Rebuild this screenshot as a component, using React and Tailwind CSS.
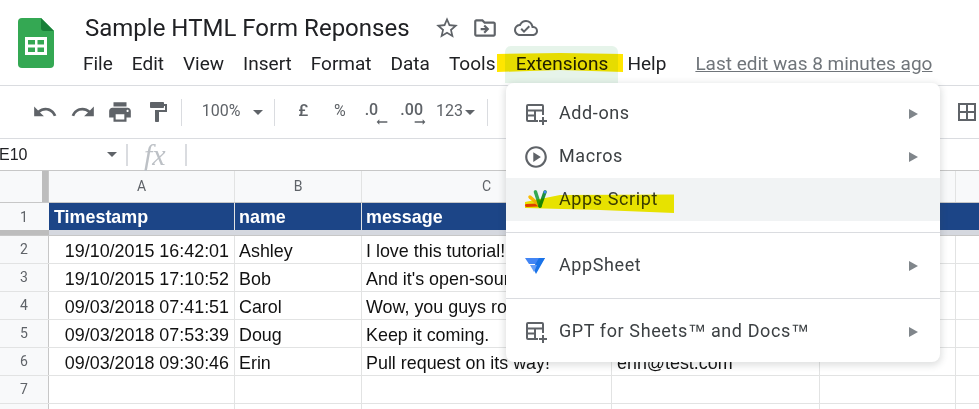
import {
  MdUndo,
  MdRedo,
  MdPrint,
  MdFormatPaint,
  MdStarBorder,
  MdOutlineDriveFileMove,
  MdOutlineCloudDone,
  MdOutlinePlayCircle,
  MdBorderAll,
  MdArrowRightAlt,
} from "react-icons/md";

const menus = ["File", "Edit", "View", "Insert", "Format", "Data", "Tools"];

const rows = [
  { n: 2, a: "19/10/2015 16:42:01", b: "Ashley", c: "I love this tutorial!", d: "ashley@test.com" },
  { n: 3, a: "19/10/2015 17:10:52", b: "Bob", c: "And it's open-source!", d: "bob@test.com" },
  { n: 4, a: "09/03/2018 07:41:51", b: "Carol", c: "Wow, you guys rock!", d: "carol@test.com" },
  { n: 5, a: "09/03/2018 07:53:39", b: "Doug", c: "Keep it coming.", d: "doug@test.com" },
  { n: 6, a: "09/03/2018 09:30:46", b: "Erin", c: "Pull request on its way!", d: "erin@test.com" },
  { n: 7, a: "", b: "", c: "", d: "" },
  { n: "", a: "", b: "", c: "", d: "" },
];

function SheetsLogo() {
  return (
    <svg viewBox="0 0 36 50" className="w-[36px] h-[50px]">
      <path d="M4 0H23L36 13V46a4 4 0 0 1-4 4H4a4 4 0 0 1-4-4V4a4 4 0 0 1 4-4z" fill="#34a853" />
      <path d="M23 0L36 13H26a3 3 0 0 1-3-3z" fill="#188038" />
      <path d="M7 19H29V37H7z" fill="#fff" />
      <path d="M10 22H17V26.500H10zM19.500 22H26V26.500H19.500zM10 29.500H17V34H10zM19.500 29.500H26V34H19.500z" fill="#34a853" />
    </svg>
  );
}

function AddonIcon() {
  return (
    <svg viewBox="0 0 22 22" className="w-[22px] h-[22px]" fill="none" stroke="#5f6368" strokeWidth="2">
      <path d="M13 18H3a1 1 0 0 1-1-1V3a1 1 0 0 1 1-1h14a1 1 0 0 1 1 1v9" />
      <path d="M2 7.500H18M2 12.500H11M10 7.500V18" />
      <path d="M18 14V22M14 18H22" />
    </svg>
  );
}

function AppsScriptIcon() {
  return (
    <svg viewBox="0 0 22 20" className="w-[22px] h-[20px]">
      <path d="M1.500 15.500L13 15" stroke="#ea4335" strokeWidth="3" strokeLinecap="round" />
      <path d="M5 7L13 14" stroke="#fbbc04" strokeWidth="3.500" strokeLinecap="round" />
      <path d="M10.500 2L15 16" stroke="#34a853" strokeWidth="3.500" strokeLinecap="round" />
      <path d="M20 2L15 16" stroke="#1e8e3e" strokeWidth="3.500" strokeLinecap="round" />
      <circle cx="10.500" cy="2" r="1.500" fill="#34a853" />
      <circle cx="20" cy="2" r="1.500" fill="#4285f4" />
    </svg>
  );
}

function AppSheetIcon() {
  return (
    <svg viewBox="0 0 20 18" className="w-[20px] h-[18px]">
      <path d="M0 1H20L16 7H4z" fill="#4285f4" />
      <path d="M14 1H20L11 17 8 11z" fill="#1a73e8" />
      <path d="M5 8H12L9 15z" fill="#669df6" />
    </svg>
  );
}

function Caret({ className }) {
  return <span className={`w-0 h-0 border-x-[5px] border-x-transparent border-t-[5px] border-t-[#5f6368] ${className || ""}`} />;
}

function Sep() {
  return <div className="w-px h-[27px] bg-[#dadce0]" />;
}

function ToolIcon({ children }) {
  return <div className="w-[38px] flex justify-center text-[#5f6368]">{children}</div>;
}

function MenuItem({ icon, label, active, highlight }) {
  return (
    <div className={`relative h-[43px] flex items-center pl-[19px] pr-[22px] ${active ? "bg-[#f1f3f4]" : ""}`}>
      <div className="w-[34px] flex items-center">{icon}</div>
      <span className="flex-1 text-[18px] text-[#3c4043] tracking-[0.6px] pb-[2px]">{label}</span>
      {!highlight && <span className="w-0 h-0 border-y-[5px] border-y-transparent border-l-[9px] border-l-[#80868b]" />}
    </div>
  );
}

function Cell({ w, children, className }) {
  return (
    <div className={`${w} shrink-0 h-full border-r border-[#e2e3e3] overflow-hidden whitespace-nowrap flex items-center ${className || ""}`}>
      {children}
    </div>
  );
}

export default function App() {
  return (
    <div className="relative w-[979px] h-[409px] overflow-hidden bg-white font-['Roboto',sans-serif]">
      {/* Title + menu bar */}
      <header className="h-[85px] flex border-b border-[#dadce0] box-content">
        <div className="w-[85px] shrink-0 pl-[18px] pt-[18px]">
          <SheetsLogo />
        </div>
        <div className="flex-1 min-w-0">
          <div className="h-[46px] flex items-center pt-[9px]">
            <h1 className="text-[24px] font-normal text-[#202124] w-[349px]">Sample HTML Form Reponses</h1>
            <MdStarBorder className="text-[#5f6368] w-[26px] h-[26px]" />
            <MdOutlineDriveFileMove className="text-[#5f6368] w-[26px] h-[26px] ml-[12px]" />
            <MdOutlineCloudDone className="text-[#5f6368] w-[24px] h-[24px] ml-[16px]" />
          </div>
          <nav className="h-[37px] flex items-center text-[19px] text-[#202124] -ml-[2px]">
            <div className="flex gap-[19px]">
              {menus.map((m) => (
                <span key={m}>{m}</span>
              ))}
            </div>
            <span className="ml-[10px] h-full w-[113px] flex items-center justify-center bg-[#e6f4ea] rounded-t-[6px]">Extensions</span>
            <span className="ml-[9px]">Help</span>
            <span className="ml-[29px] text-[#70757a] underline">Last edit was 8 minutes ago</span>
          </nav>
        </div>
      </header>

      {/* Toolbar */}
      <div className="h-[52px] flex items-center pl-[26px] border-b border-[#dadce0] box-content text-[#5f6368]">
        <ToolIcon><MdUndo size={26} /></ToolIcon>
        <ToolIcon><MdRedo size={26} /></ToolIcon>
        <ToolIcon><MdPrint size={26} /></ToolIcon>
        <ToolIcon><MdFormatPaint size={24} /></ToolIcon>
        <div className="ml-[4px]"><Sep /></div>
        <span className="ml-[20px] w-[52px] text-[16px] pb-[2px]">100%</span>
        <Caret className="mr-[11px]" />
        <Sep />
        <span className="ml-[23px] w-[35px] text-[17px] font-medium pb-[2px]">£</span>
        <span className="w-[32px] text-[16px] pl-[1px] pb-[2px]">%</span>
        <div className="w-[36px] relative h-[30px] text-[16px] font-medium">
          <span className="absolute left-[0px] top-[1px]">.0</span>
          <MdArrowRightAlt size={16} className="absolute left-[9px] top-[17px] rotate-180" />
        </div>
        <div className="w-[36px] relative h-[30px] text-[16px] font-medium">
          <span className="absolute left-[0px] top-[1px]">.00</span>
          <MdArrowRightAlt size={16} className="absolute left-[12px] top-[17px]" />
        </div>
        <span className="text-[16px] pb-[2px]">123</span>
        <Caret className="ml-[2px] mr-[12px]" />
        <Sep />
        <MdBorderAll size={24} className="ml-[467px] shrink-0" />
      </div>

      {/* Formula bar */}
      <div className="h-[31px] flex items-center border-b border-[#c7c7c7] box-content">
        <span className="-ml-[1px] w-[108px] text-[16px] text-[#202124] font-['Liberation_Sans',sans-serif]">E10</span>
        <Caret />
        <div className="ml-[9px] w-[2px] h-[22px] bg-[#dadce0]" />
        <span className="ml-[16px] w-[41px] text-[30px] leading-none italic text-[#bdc1c6] font-['Liberation_Serif',serif]">fx</span>
        <div className="w-[2px] h-[22px] bg-[#dadce0]" />
      </div>

      {/* Grid */}
      <div className="font-['Liberation_Sans',sans-serif]">
        <div className="h-[32px] flex bg-[#f8f9fa] border-b border-[#c7c7c7] text-[14px] text-[#5f6368] font-['Roboto',sans-serif]">
          <div className="w-[49px] shrink-0 h-full border-r-[1px] border-[#c7c7c7] pl-[42px]">
            <div className="w-[6px] h-full bg-[#bdbdbd]" />
          </div>
          <Cell w="w-[186px]" className="justify-center border-[#c7c7c7]">A</Cell>
          <Cell w="w-[127px]" className="justify-center border-[#c7c7c7]">B</Cell>
          <Cell w="w-[250px]" className="justify-center border-[#c7c7c7]">C</Cell>
          <Cell w="w-[208px]" className="justify-center border-[#c7c7c7]">D</Cell>
          <Cell w="w-[136px]" className="justify-center border-[#c7c7c7]">E</Cell>
        </div>

        {/* Frozen header row */}
        <div className="h-[28px] flex">
          <div className="w-[49px] shrink-0 flex items-center justify-center bg-[#f8f9fa] text-[14px] text-[#5f6368] font-['Roboto',sans-serif] pr-[1px]">1</div>
          <div className="flex-1 flex bg-[#1c4587] text-white font-bold text-[17.900px]">
            <Cell w="w-[186px]" className="pl-[5px] border-[#2a5291]">Timestamp</Cell>
            <Cell w="w-[127px]" className="pl-[4px] border-[#2a5291]">name</Cell>
            <Cell w="w-[250px]" className="pl-[4px] border-[#2a5291]">message</Cell>
            <Cell w="w-[208px]" className="pl-[4px] border-[#2a5291]">email</Cell>
          </div>
        </div>
        <div className="h-[5px] flex border-b border-[#c7c7c7] box-content -mt-px">
          <div className="w-[49px] bg-[#bdbdbd]" />
          <div className="flex-1 bg-[#d5d8df]" />
        </div>

        {rows.map((r, i) => (
          <div key={i} className="h-[28px] flex border-b border-[#e2e3e3] text-[17.900px] text-[#111]">
            <div className="w-[49px] shrink-0 flex items-center justify-center bg-[#f8f9fa] border-r border-[#c7c7c7] text-[14px] text-[#5f6368] font-['Roboto',sans-serif]">
              {r.n}
            </div>
            <Cell w="w-[186px]" className="justify-end pr-[5px] pt-[3px]">{r.a}</Cell>
            <Cell w="w-[127px]" className="pl-[4px] pt-[3px]">{r.b}</Cell>
            <Cell w="w-[250px]" className="pl-[4px] pt-[3px]">{r.c}</Cell>
            <Cell w="w-[208px]" className="pl-[5px] pt-[3px]">{r.d}</Cell>
            <Cell w="w-[136px]" />
          </div>
        ))}
      </div>

      {/* Extensions dropdown */}
      <div className="absolute left-[506px] top-[83px] w-[434px] h-[279px] bg-white rounded-[8px] shadow-[0_2px_6px_2px_rgba(60,64,67,0.15)] pt-[9px]">
        <MenuItem icon={<AddonIcon />} label="Add-ons" />
        <MenuItem icon={<MdOutlinePlayCircle size={26} className="text-[#5f6368] -ml-[2px]" />} label="Macros" />
        <MenuItem icon={<AppsScriptIcon />} label="Apps Script" active highlight />
        <div className="my-[11px] h-px bg-[#dadce0]" />
        <MenuItem icon={<AppSheetIcon />} label="AppSheet" />
        <div className="my-[11px] h-px bg-[#dadce0]" />
        <MenuItem
          icon={<AddonIcon />}
          label={
            <>
              GPT for Sheets<span className="font-['Liberation_Sans',sans-serif] tracking-normal">™</span> and Docs<span className="font-['Liberation_Sans',sans-serif] tracking-normal">™</span>
            </>
          }
        />
      </div>

      {/* Hand-drawn marker highlights */}
      <svg viewBox="0 0 979 409" className="absolute inset-0 w-[979px] h-[409px] mix-blend-multiply pointer-events-none">
        <path d="M497 54L560 53 623 54V72L560 70 497 72z" fill="#ffe600" />
        <path d="M525 202L560 195 674 194.500V213L600 210 525 208z" fill="#f5ee00" />
      </svg>
    </div>
  );
}
